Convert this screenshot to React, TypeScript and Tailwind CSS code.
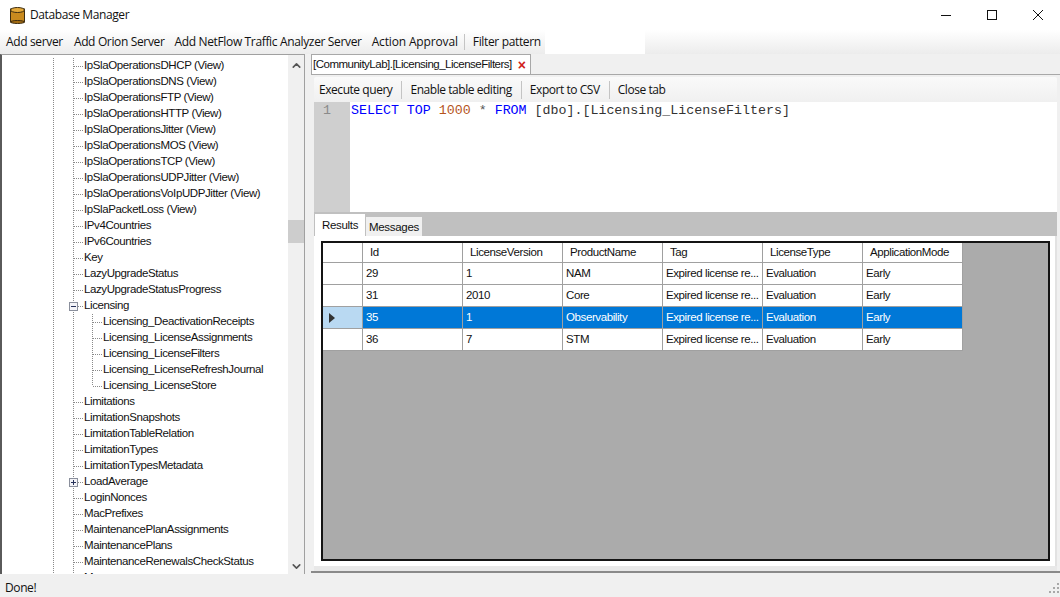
import { ChevronDown, ChevronUp } from "lucide-react";

type TreeRow = { label: string; child?: boolean; toggle?: "plus" | "minus"; last?: boolean };

const treeRows: TreeRow[] = [
  { label: "IpSlaOperationsDHCP (View)" },
  { label: "IpSlaOperationsDNS (View)" },
  { label: "IpSlaOperationsFTP (View)" },
  { label: "IpSlaOperationsHTTP (View)" },
  { label: "IpSlaOperationsJitter (View)" },
  { label: "IpSlaOperationsMOS (View)" },
  { label: "IpSlaOperationsTCP (View)" },
  { label: "IpSlaOperationsUDPJitter (View)" },
  { label: "IpSlaOperationsVoIpUDPJitter (View)" },
  { label: "IpSlaPacketLoss (View)" },
  { label: "IPv4Countries" },
  { label: "IPv6Countries" },
  { label: "Key" },
  { label: "LazyUpgradeStatus" },
  { label: "LazyUpgradeStatusProgress" },
  { label: "Licensing", toggle: "minus" },
  { label: "Licensing_DeactivationReceipts", child: true },
  { label: "Licensing_LicenseAssignments", child: true },
  { label: "Licensing_LicenseFilters", child: true },
  { label: "Licensing_LicenseRefreshJournal", child: true },
  { label: "Licensing_LicenseStore", child: true, last: true },
  { label: "Limitations" },
  { label: "LimitationSnapshots" },
  { label: "LimitationTableRelation" },
  { label: "LimitationTypes" },
  { label: "LimitationTypesMetadata" },
  { label: "LoadAverage", toggle: "plus" },
  { label: "LoginNonces" },
  { label: "MacPrefixes" },
  { label: "MaintenancePlanAssignments" },
  { label: "MaintenancePlans" },
  { label: "MaintenanceRenewalsCheckStatus" },
  { label: "Maps", toggle: "plus" },
];

const columns = ["Id", "LicenseVersion", "ProductName", "Tag", "LicenseType", "ApplicationMode"];

const rows = [
  { id: "29", version: "1", product: "NAM" },
  { id: "31", version: "2010", product: "Core" },
  { id: "35", version: "1", product: "Observability", selected: true },
  { id: "36", version: "7", product: "STM" },
];

function Guides({ row }: { row: TreeRow }) {
  const dots = { stroke: "#8a8a8a", strokeDasharray: "1 1", strokeWidth: 1 };
  return (
    <svg width={row.child ? 101 : 82} height={16} className="shrink-0">
      <line x1={51.5} y1={0} x2={51.5} y2={16} {...dots} />
      <line x1={71.5} y1={0} x2={71.5} y2={16} {...dots} />
      {row.child ? (
        <>
          <line x1={90.5} y1={0} x2={90.5} y2={row.last ? 8 : 16} {...dots} />
          <line x1={91} y1={8.5} x2={100} y2={8.5} {...dots} />
        </>
      ) : (
        <line x1={72} y1={8.5} x2={81} y2={8.5} {...dots} />
      )}
      {row.toggle && (
        <>
          <rect x={67.5} y={4.5} width={8} height={8} fill="#f4f4f8" stroke="#8a8f9c" />
          <line x1={69} y1={8.5} x2={74} y2={8.5} stroke="#27325a" />
          {row.toggle === "plus" && <line x1={71.5} y1={6} x2={71.5} y2={11} stroke="#27325a" />}
        </>
      )}
    </svg>
  );
}

function ToolbarItem({ label, divider }: { label: string; divider?: boolean }) {
  return (
    <span className={`flex h-[18px] items-center whitespace-nowrap pr-[9px] mr-[8px] ${divider ? "border-r border-[#c4c4c4]" : ""}`}>{label}</span>
  );
}

export default function App() {
  return (
    <div className="flex h-[597px] w-[1060px] flex-col overflow-hidden bg-[#f0f0f0] font-['Open_Sans','Liberation_Sans',sans-serif] text-[12px] tracking-[-0.4px] text-[#111]">
      {/* Title bar */}
      <div className="flex h-[30px] shrink-0 items-center bg-white pl-[10px]">
        <svg width={15} height={17} viewBox="0 0 15 17" className="shrink-0">
          <rect x={0.5} y={2} width={14} height={13} fill="#c98a1e" stroke="#3d2c10" />
          <ellipse cx={7.5} cy={3} rx={7} ry={2.5} fill="#e4a93a" stroke="#3d2c10" />
          <ellipse cx={7.5} cy={15} rx={7} ry={1.5} fill="#a56c12" stroke="#3d2c10" />
        </svg>
        <span className="ml-[5px]">Database Manager</span>
        <div className="ml-auto flex items-center">
          <svg width={12} height={12} className="mr-[34px]"><line x1={1} y1={6.5} x2={11} y2={6.5} stroke="#111" /></svg>
          <svg width={12} height={12} className="mr-[34px]"><rect x={1.5} y={1.5} width={9} height={9} fill="none" stroke="#111" /></svg>
          <svg width={12} height={12} className="mr-[16px]"><path d="M1 1 L11 11 M11 1 L1 11" stroke="#111" fill="none" /></svg>
        </div>
      </div>

      {/* Menu bar */}
      <div className="flex h-[24px] shrink-0 items-center whitespace-nowrap bg-gradient-to-b from-white to-[#ececec] pl-[6px] tracking-[-0.35px]">
        <span className="mr-[11px]">Add server</span>
        <span className="mr-[10px]">Add Orion Server</span>
        <span className="mr-[10px]">Add NetFlow Traffic Analyzer Server</span>
        <span className="mr-[6px] tracking-[-0.15px]">Action Approval</span>
        <span className="h-[16px] border-l border-[#c4c4c4]" />
        <span className="ml-[8px] w-[72px]">Filter pattern</span>
        <div className="h-[24px] w-[100px] bg-white" />
      </div>

      {/* Main area */}
      <div className="flex min-h-0 flex-1">
        {/* Object tree */}
        <div className="flex w-[305px] shrink-0 border-l-2 border-t border-r border-l-[#5a5a5a] border-t-[#a0a0a0] border-r-[#a0a0a0] bg-white">
          <div className="min-w-0 flex-1 overflow-hidden pt-[3px] font-['Liberation_Sans',sans-serif] text-[11.5px] tracking-[-0.4px]">
            {treeRows.map((row) => (
              <div key={row.label} className="flex h-4 items-center whitespace-nowrap">
                <Guides row={row} />
                <span>{row.label}</span>
              </div>
            ))}
          </div>
          <div className="flex w-[16px] shrink-0 flex-col items-center bg-[#f0f0f0] pt-[4px] text-[#555]">
            <ChevronUp size={13} strokeWidth={3} />
            <div className="mt-[148px] h-[23px] w-full bg-[#cdcdcd]" />
            <ChevronDown size={13} strokeWidth={3} className="mt-auto mb-[1px]" />
          </div>
        </div>

        {/* Query pane */}
        <div className="flex min-w-0 flex-1 flex-col pl-[6px]">
          <div className="flex h-[21px] shrink-0 items-end border-b border-[#a8a8a8]">
            <div className="flex h-[20px] w-[220px] items-center border-x border-t border-[#a8a8a8] bg-white pl-[1px] font-['Liberation_Sans',sans-serif] text-[11.5px] tracking-[-0.5px]">
              <span className="whitespace-nowrap">[CommunityLab].[Licensing_LicenseFilters]</span>
              <span className="ml-[6px] text-[14px] leading-none font-bold text-[#d02020]">×</span>
            </div>
          </div>
          <div className="flex min-h-0 flex-1 flex-col pl-[3px] pr-[3px] pt-[2px]">
            <div className="flex h-[25px] shrink-0 items-center rounded-t-[2px] bg-gradient-to-b from-[#fafafa] to-[#f0f0f0] pl-[5px] tracking-[-0.45px]">
              <ToolbarItem label="Execute query" divider />
              <ToolbarItem label="Enable table editing" divider />
              <ToolbarItem label="Export to CSV" divider />
              <ToolbarItem label="Close tab" />
            </div>

            {/* SQL editor */}
            <div className="flex h-[110px] shrink-0 bg-white font-['Liberation_Mono',monospace] text-[13.3px] leading-[16px] tracking-normal">
              <div className="w-[36px] shrink-0 bg-[#cfcfcf] pl-[9px] pt-[1px] text-[#8a8a8a]">1</div>
              <pre className="ml-px pt-[1px] font-['Liberation_Mono',monospace]">
                <span className="text-[#0000ff]">SELECT TOP </span>
                <span className="text-[#b5541c]">1000 </span>
                <span className="text-[#555]">* </span>
                <span className="text-[#0000ff]">FROM </span>
                <span className="text-[#333]">[dbo].[Licensing_LicenseFilters]</span>
              </pre>
            </div>

            {/* Results */}
            <div className="flex h-[24px] shrink-0 items-end bg-[#c0c0c0] pl-[1px] font-['Liberation_Sans',sans-serif] text-[11.5px] tracking-[-0.3px]">
              <div className="flex h-[22px] w-[50px] items-center justify-center bg-white pt-[2px]">Results</div>
              <div className="ml-[1px] flex h-[19px] w-[56px] items-center justify-center bg-[#f0f0f0] pt-[3px]">Messages</div>
            </div>
            <div className="flex min-h-0 flex-1 flex-col border-r-2 border-[#e2e2e2] bg-white pl-[7px] pr-[5px] pt-[5px] pb-[5px]">
              <div className="flex-1 overflow-hidden border-2 border-[#141414] bg-[#ababab] font-['Liberation_Sans',sans-serif] text-[11.5px] tracking-[-0.4px]">
                <div className="flex h-[20px] w-[640px] border-b border-[#a0a0a0] bg-white">
                  <div className="w-[40px] shrink-0 border-r border-[#a0a0a0]" />
                  {columns.map((name) => (
                    <div key={name} className="flex w-[100px] shrink-0 items-center whitespace-nowrap border-r border-[#a0a0a0] pt-[1px] pl-[7px]">{name}</div>
                  ))}
                </div>
                {rows.map((row) => (
                  <div
                    key={row.id}
                    className={`flex h-[22px] w-[640px] border-b border-[#a0a0a0] ${row.selected ? "bg-[#0078d7] text-white" : "bg-white"}`}
                  >
                    <div className={`flex w-[40px] shrink-0 items-center border-r border-[#a0a0a0] pl-[6px] ${row.selected ? "bg-[#b9d9f2]" : "bg-white"}`}>
                      {row.selected && (
                        <svg width={6} height={10}><path d="M0 0 L6 5 L0 10 Z" fill="#333" /></svg>
                      )}
                    </div>
                    {[row.id, row.version, row.product, "Expired license re...", "Evaluation", "Early"].map((cell, i) => (
                      <div key={i} className="flex w-[100px] shrink-0 items-center whitespace-nowrap border-r border-[#a0a0a0] pt-[1px] pl-[3px]">{cell}</div>
                    ))}
                  </div>
                ))}
              </div>
            </div>
            <div className="h-[5px] shrink-0 bg-[#e8e8e8]" />
          </div>
          <div className="h-[3px] shrink-0 border-t-2 border-[#8a8a8a]" />
        </div>
      </div>

      {/* Status bar */}
      <div className="flex h-[23px] shrink-0 items-center pl-[5px] pt-[4px]">
        <span>Done!</span>
        <svg width={12} height={12} className="ml-auto">
          <path d="M9 1h2v2H9zM5 5h2v2H5zM9 5h2v2H9zM1 9h2v2H1zM5 9h2v2H5zM9 9h2v2H9z" fill="#a8a8a8" />
        </svg>
      </div>
    </div>
  );
}
